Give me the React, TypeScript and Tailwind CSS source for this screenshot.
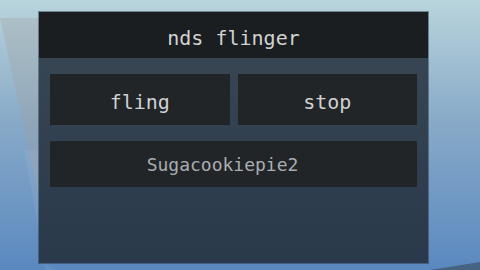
import * as React from "react";

const Wallpaper: React.FC = () => (
  <svg
    className="absolute inset-0 h-full w-full"
    viewBox="0 0 480 270"
    preserveAspectRatio="none"
  >
    <defs>
      <linearGradient id="sky" x1="0" y1="0" x2="0" y2="1">
        <stop offset="0" stopColor="#b9d4dc" />
        <stop offset="0.45" stopColor="#88aac8" />
        <stop offset="1" stopColor="#5a88bf" />
      </linearGradient>
    </defs>
    <rect width="480" height="270" fill="url(#sky)" />
    {/* grey wedge left of the window */}
    <polygon points="0,18 39,18 39,198" fill="#a19f9c" fillOpacity="0.3" />
    <polygon points="24,150 39,150 39,262 58,270 46,270" fill="#ffffff" fillOpacity="0.06" />
    <path d="M430 270 L480 262 L480 270 Z" fill="#3b4a5a" fillOpacity="0.6" />
  </svg>
);

interface IProps {
  label: string;
  className?: string;
}

const Tile: React.FC<IProps> = ({ label, className = "" }) => (
  <div
    className={`flex items-center justify-center bg-[#212528] ${className}`}
  >
    {label}
  </div>
);

const App: React.FC = () => {
  return (
    <div
      className="relative h-[270px] w-[480px] overflow-hidden"
      style={{ fontFamily: '"DejaVu Sans Mono", "Liberation Mono", monospace' }}
    >
      <Wallpaper />
      <div className="relative pl-[39px] pt-[12px]">
        <div className="flex h-[251px] w-[389px] flex-col bg-gradient-to-b from-[#3a4855] to-[#2a394b] shadow-[0_0_0_1px_rgba(40,55,70,0.5)]">
          <div className="flex h-[46px] items-center justify-center bg-[#1b1e21] pt-[6px] text-[20px] text-[#d2d2d2]">
            nds flinger
          </div>
          <div className="flex flex-col gap-[16px] px-[11px] pt-[16px]">
            <div className="flex gap-[8px] text-[20px] text-[#d0d0d0]">
              <Tile label="fling" className="h-[51px] flex-1 pt-[5px]" />
              <Tile label="stop" className="h-[51px] flex-1 pt-[5px]" />
            </div>
            <Tile
              label="Sugacookiepie2"
              className="h-[46px] pr-[22px] pt-[1px] text-[18px] text-[#a9adb1]"
            />
          </div>
        </div>
      </div>
    </div>
  );
};

export default App;
